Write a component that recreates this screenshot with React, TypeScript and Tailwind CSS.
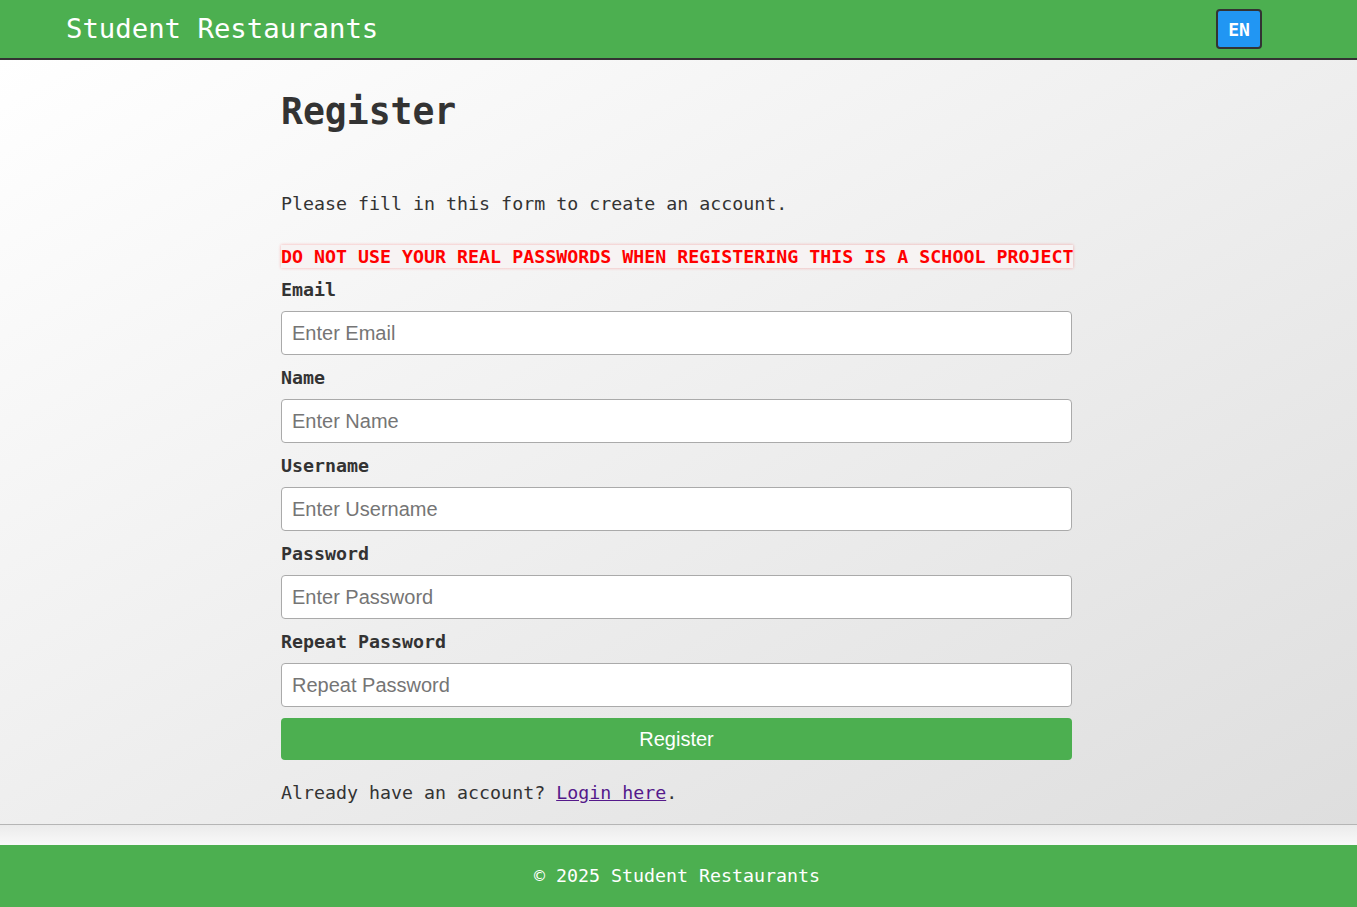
import React from "react";

const mono = "font-['DejaVu_Sans_Mono',monospace]";
const sans = "font-['Liberation_Sans',Arial,sans-serif]";

const fields = [
  { label: "Email", placeholder: "Enter Email", type: "email" },
  { label: "Name", placeholder: "Enter Name", type: "text" },
  { label: "Username", placeholder: "Enter Username", type: "text" },
  { label: "Password", placeholder: "Enter Password", type: "password" },
  { label: "Repeat Password", placeholder: "Repeat Password", type: "password" },
];

const App = () => {
  return (
    <div className={`min-h-screen bg-[#f9f9f9] ${mono}`}>
      {/* Header */}
      <header className="h-[60px] bg-[#4caf50] border-b-2 border-[#333] flex items-center justify-between pl-[66px] pr-[95px]">
        <div className="text-white text-[27.3px] leading-none">Student Restaurants</div>
        <button className="w-[46px] h-[40px] bg-[#2196f3] border-2 border-[#333] rounded-[4px] text-white font-bold text-[18px] flex items-center justify-center">
          EN
        </button>
      </header>

      {/* Main content */}
      <main className="bg-linear-to-br from-[#ffffff] to-[#dedede] border-b border-[#b5b5b5] pt-[30px] pb-[20px]">
        <div className="ml-[281px] w-[791px] text-[#333] text-[18.3px] leading-[22px]">
          <h1 className="text-[36.4px] leading-[44px] font-bold">Register</h1>
          <p className="mt-[58px] pt-[1px]">Please fill in this form to create an account.</p>

          <div className="mt-[30px] h-[23px] w-fit whitespace-nowrap flex items-center pt-[1px] bg-[#f7f3f3] shadow-[0_0_3px_rgba(255,0,0,0.3)] text-[#ff0000] font-bold text-[18.3px]">
            DO NOT USE YOUR REAL PASSWORDS WHEN REGISTERING THIS IS A SCHOOL PROJECT
          </div>

          <form className="mt-[10px]" onSubmit={(e) => e.preventDefault()}>
            {fields.map((f) => (
              <div key={f.label} className="mb-[11px]">
                <label className="block font-bold pt-[1px] mb-[10px]">{f.label}</label>
                <input
                  type={f.type}
                  placeholder={f.placeholder}
                  className={`block w-full h-[44px] bg-white border border-[#aaa] rounded-[4px] px-[10px] text-[20px] placeholder:text-[#757575] ${sans}`}
                />
              </div>
            ))}
            <button
              type="submit"
              className={`w-full h-[42px] bg-[#4caf50] text-white rounded-[4px] text-[20px] ${sans}`}
            >
              Register
            </button>
          </form>

          <p className="mt-[22px]">
            Already have an account?{" "}
            <a href="#" className="text-[#551a8b] underline">
              Login here
            </a>
            .
          </p>
        </div>
      </main>

      <div className="h-[20px] bg-linear-to-b from-[#ebebeb] to-[#f9f9f9]" />

      {/* Footer */}
      <footer className="h-[62px] bg-[#4caf50] flex items-center justify-center text-white text-[18.3px] pr-[3px]">
        © 2025 Student Restaurants
      </footer>
    </div>
  );
};

export default App;
